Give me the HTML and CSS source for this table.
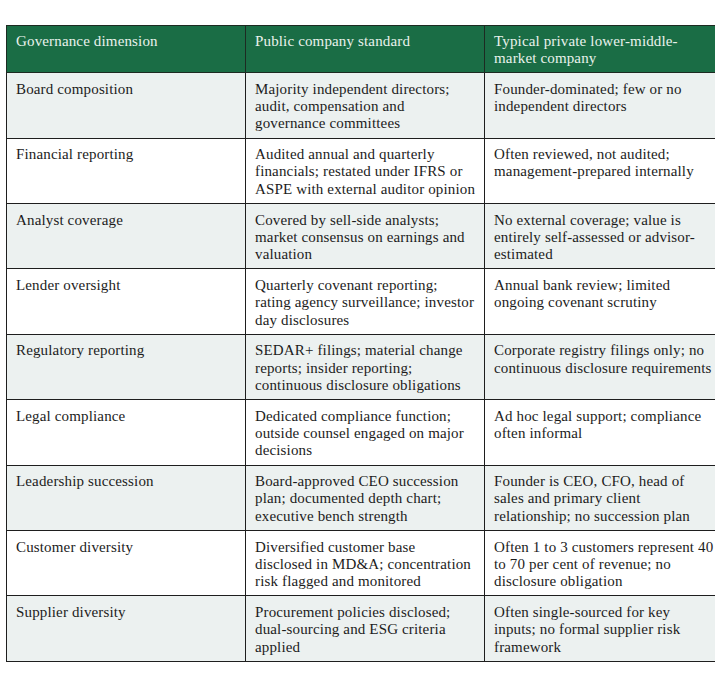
FILE: index.html
```html
<!DOCTYPE html>
<html lang="en">
<head>
<meta charset="utf-8">
<title>Governance comparison</title>
<link rel="stylesheet" href="styles.css">
</head>
<body>
<div class="table">
  <div class="cell head first">Governance dimension</div>
  <div class="cell head">Public company standard</div>
  <div class="cell head">Typical private lower-middle-<br>market company</div>

  <div class="cell first shade">Board composition</div>
  <div class="cell shade">Majority independent directors;<br>audit, compensation and<br>governance committees</div>
  <div class="cell shade">Founder-dominated; few or no<br>independent directors</div>

  <div class="cell first">Financial reporting</div>
  <div class="cell">Audited annual and quarterly<br>financials; restated under IFRS or<br>ASPE with external auditor opinion</div>
  <div class="cell">Often reviewed, not audited;<br>management-prepared internally</div>

  <div class="cell first shade">Analyst coverage</div>
  <div class="cell shade">Covered by sell-side analysts;<br>market consensus on earnings and<br>valuation</div>
  <div class="cell shade">No external coverage; value is<br>entirely self-assessed or advisor-<br>estimated</div>

  <div class="cell first">Lender oversight</div>
  <div class="cell">Quarterly covenant reporting;<br>rating agency surveillance; investor<br>day disclosures</div>
  <div class="cell">Annual bank review; limited<br>ongoing covenant scrutiny</div>

  <div class="cell first shade">Regulatory reporting</div>
  <div class="cell shade">SEDAR+ filings; material change<br>reports; insider reporting;<br>continuous disclosure obligations</div>
  <div class="cell shade">Corporate registry filings only; no<br>continuous disclosure requirements</div>

  <div class="cell first">Legal compliance</div>
  <div class="cell">Dedicated compliance function;<br>outside counsel engaged on major<br>decisions</div>
  <div class="cell">Ad hoc legal support; compliance<br>often informal</div>

  <div class="cell first shade">Leadership succession</div>
  <div class="cell shade">Board-approved CEO succession<br>plan; documented depth chart;<br>executive bench strength</div>
  <div class="cell shade">Founder is CEO, CFO, head of<br>sales and primary client<br>relationship; no succession plan</div>

  <div class="cell first">Customer diversity</div>
  <div class="cell">Diversified customer base<br>disclosed in MD&amp;A; concentration<br>risk flagged and monitored</div>
  <div class="cell">Often 1 to 3 customers represent 40<br>to 70 per cent of revenue; no<br>disclosure obligation</div>

  <div class="cell first shade">Supplier diversity</div>
  <div class="cell shade">Procurement policies disclosed;<br>dual-sourcing and ESG criteria<br>applied</div>
  <div class="cell shade">Often single-sourced for key<br>inputs; no formal supplier risk<br>framework</div>
</div>
</body>
</html>
```
FILE: styles.css
```css
html, body {
  margin: 0;
  padding: 0;
  background: #ffffff;
}

body {
  font-family: "Liberation Serif", "Times New Roman", serif;
  font-size: 15px;
  letter-spacing: 0.15px;
  color: #1c1c1c;
}

.table {
  display: grid;
  grid-template-columns: 239px 239px 231px;
  margin: 25px 0 0 6px;
  width: 709px;
  border-top: 1px solid #1d2a22;
}

.cell {
  box-sizing: border-box;
  height: 65.4px;
  padding: 7.5px 0 0 9px;
  line-height: 17.3px;
  border-left: 1px solid #1e1e1e;
  border-bottom: 1px solid #1e1e1e;
  white-space: nowrap;
  overflow: hidden;
}

.cell.shade {
  background: #ecf1f0;
}

.cell.head {
  height: 47.3px;
  padding-top: 6.5px;
  background: #1a6d45;
  color: #e9f2ec;
  border-bottom-color: #1d2a22;
  border-left-color: #1d2a22;
}
```
